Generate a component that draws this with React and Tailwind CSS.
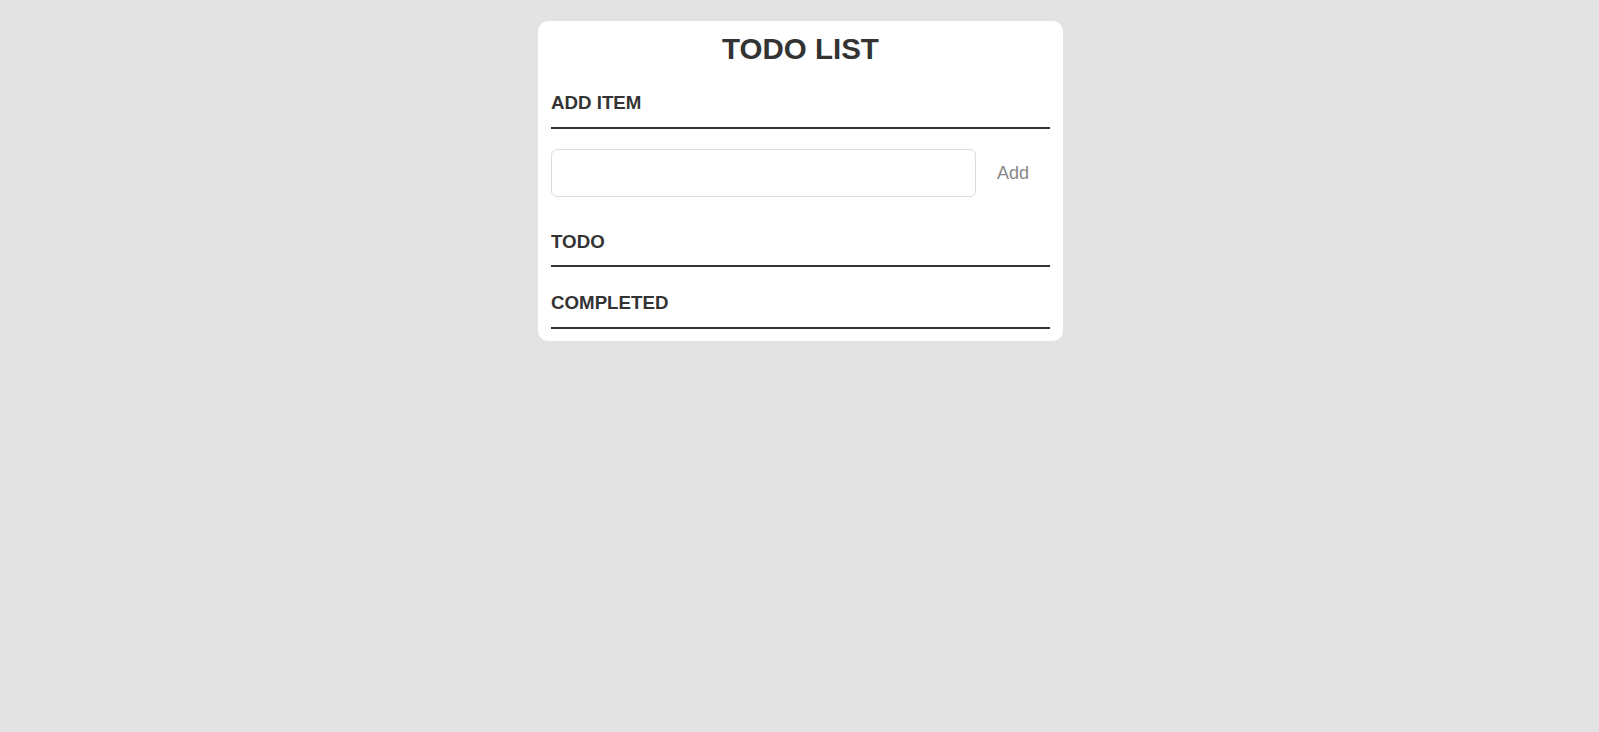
import { useState } from "react";

function Section({ title, className = "" }) {
  return (
    <h3
      className={`border-b-2 border-[#333] text-[18.72px] leading-[22px] font-bold text-[#333] ${className}`}
    >
      {title}
    </h3>
  );
}

function App() {
  const [text, setText] = useState("");

  return (
    <div
      className="flex min-h-screen justify-center bg-[#e3e3e3] pt-[21px] pl-[2px]"
      style={{ fontFamily: '"Liberation Sans", Arial, sans-serif' }}
    >
      <div className="h-fit w-[525px] rounded-[10px] bg-white px-[13px] pt-[11px] pb-[12px]">
        <h1 className="text-center text-[29.5px] leading-[34px] font-bold text-[#333]">
          TODO LIST
        </h1>

        <Section title="ADD ITEM" className="mt-[26px] pb-[13px]" />

        <div className="mt-[20px] flex items-center">
          <input
            type="text"
            value={text}
            onChange={(e) => setText(e.target.value)}
            className="h-[48px] flex-1 rounded-[6px] border border-[#ddd] px-3 text-[18px] text-[#333] outline-none"
          />
          <button className="w-[74px] text-center text-[18px] text-[#888]">Add</button>
        </div>

        <Section title="TODO" className="mt-[34px] pb-[12px]" />
        <Section title="COMPLETED" className="mt-[25px] pb-[13px]" />
      </div>
    </div>
  );
}

export default App;
